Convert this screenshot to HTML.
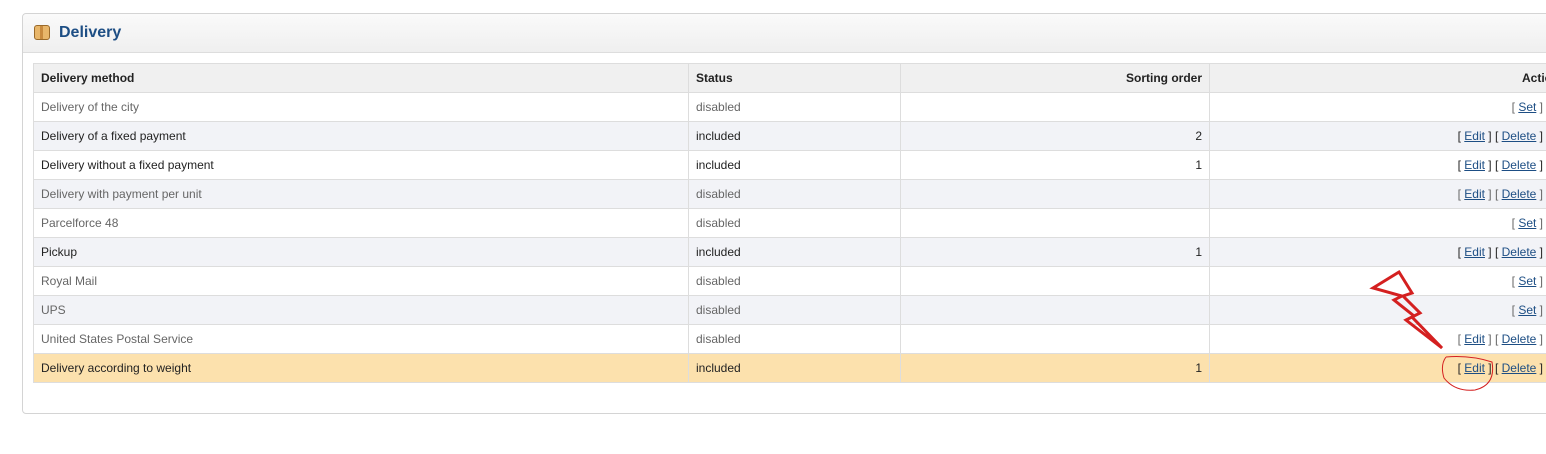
<!DOCTYPE html>
<html><head><style>
body{margin:0;width:1546px;height:454px;background:#fff;font-family:"Liberation Sans",Arial,sans-serif;overflow:hidden;position:relative}
.panel{position:absolute;left:22px;top:13px;width:1560px;height:399px;border:1px solid #d4d4d4;border-radius:4px;background:#fff}
.hd{height:38px;border-bottom:1px solid #ddd;background:linear-gradient(#fafafa,#efefef);border-radius:4px 4px 0 0;position:relative}
.hd span{position:absolute;left:36px;top:10px;font-size:16px;font-weight:bold;color:#1d4e84}
.ic{position:absolute;left:11px;top:11px;width:14px;height:13px;background:#e8b66a;border:1px solid #9a6a2a;border-radius:3px}
.ic:after{content:"";position:absolute;left:5px;top:0;width:3px;height:13px;background:#c88a3e}
table{position:absolute;left:10px;top:49px;border-collapse:collapse;font-size:12px;width:1523px;table-layout:fixed}
td,th{height:28px;border:1px solid #ddd;padding:0 7px;color:#666;text-align:left;white-space:nowrap;overflow:hidden}
th{background:#f0f0f0;color:#222;font-weight:bold}
tr:nth-child(odd) td{background:#f2f3f7}
.r{text-align:right}
td.a{text-align:right;padding-right:13px;color:#666}
.i td{color:#222}
tr.sel td{background:#fce1ad}
a{color:#1d4e84}
</style></head><body>
<div class="panel"><div class="hd"><div class="ic"></div><span>Delivery</span></div>
<table>
<colgroup><col style="width:655px"><col style="width:212px"><col style="width:309px"><col style="width:347px"></colgroup>
<tr><th>Delivery method</th><th>Status</th><th class="r">Sorting order</th><th style="padding-left:312px">Actions</th></tr>
<tr><td>Delivery of the city</td><td>disabled</td><td></td><td class="a">[ <a href="#">Set</a> ]</td></tr>
<tr class="i"><td>Delivery of a fixed payment</td><td>included</td><td class="r">2</td><td class="a">[ <a href="#">Edit</a> ] [ <a href="#">Delete</a> ]</td></tr>
<tr class="i"><td>Delivery without a fixed payment</td><td>included</td><td class="r">1</td><td class="a">[ <a href="#">Edit</a> ] [ <a href="#">Delete</a> ]</td></tr>
<tr><td>Delivery with payment per unit</td><td>disabled</td><td></td><td class="a">[ <a href="#">Edit</a> ] [ <a href="#">Delete</a> ]</td></tr>
<tr><td>Parcelforce 48</td><td>disabled</td><td></td><td class="a">[ <a href="#">Set</a> ]</td></tr>
<tr class="i"><td>Pickup</td><td>included</td><td class="r">1</td><td class="a">[ <a href="#">Edit</a> ] [ <a href="#">Delete</a> ]</td></tr>
<tr><td>Royal Mail</td><td>disabled</td><td></td><td class="a">[ <a href="#">Set</a> ]</td></tr>
<tr><td>UPS</td><td>disabled</td><td></td><td class="a">[ <a href="#">Set</a> ]</td></tr>
<tr><td>United States Postal Service</td><td>disabled</td><td></td><td class="a">[ <a href="#">Edit</a> ] [ <a href="#">Delete</a> ]</td></tr>
<tr class="i sel"><td>Delivery according to weight</td><td>included</td><td class="r">1</td><td class="a">[ <a href="#">Edit</a> ] [ <a href="#">Delete</a> ]</td></tr>
</table></div>
<svg style="position:absolute;left:0;top:0" width="1546" height="454">
<path d="M1373 288 L1399 272 L1412 293 L1403 296 L1420 313 L1412 317 L1442 348 L1406 320 L1414 316 L1394 300 L1402 296 Z" fill="none" stroke="#d42020" stroke-width="3" stroke-linejoin="miter"/>
<path d="M1446 357 Q1470 355 1492 362 Q1496 385 1475 390 Q1455 392 1444 378 Q1440 365 1446 357" fill="none" stroke="#d42020" stroke-width="1"/>
</svg>
</body></html>
